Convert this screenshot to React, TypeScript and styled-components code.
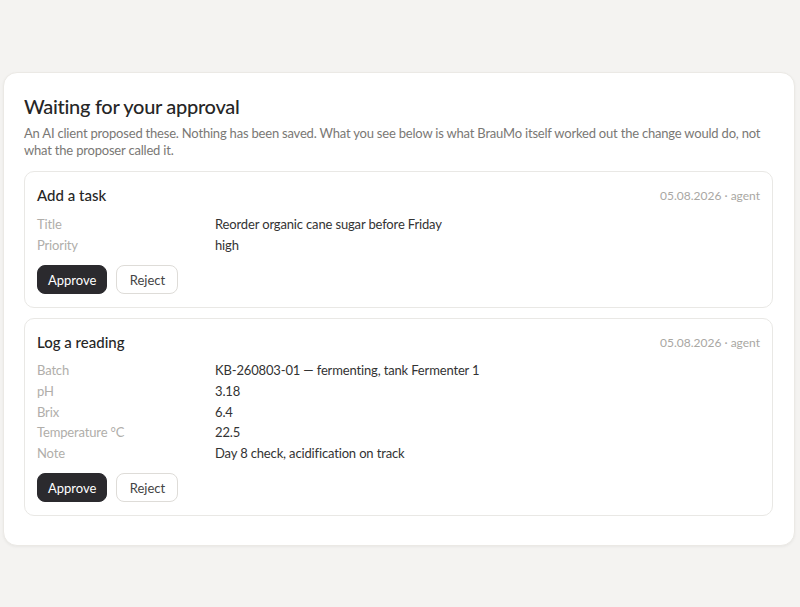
import React from 'react';
import styled, { createGlobalStyle } from 'styled-components';

const GlobalStyle = createGlobalStyle`
    html, body {
        margin: 0;
        padding: 0;
        background: #f4f3f1;
        font-family: Lato, "Noto Sans", sans-serif;
        -webkit-font-smoothing: antialiased;
    }
`;

const Page = styled.div`
    padding: 72px 5px 60px 3px;
`;

const Panel = styled.section`
    background: #ffffff;
    border: 1px solid #ebe9e5;
    border-radius: 14px;
    box-shadow: 0 1px 3px rgba(0, 0, 0, 0.05);
    padding: 20px 21px 29px 20px;
`;

const Heading = styled.h2`
    margin: 0;
    font-size: 20px;
    line-height: 26px;
    font-weight: 500;
    color: #262626;
    letter-spacing: -0.3px;
`;

const Intro = styled.p`
    margin: 6px 0 12px;
    font-size: 13px;
    line-height: 17px;
    color: #7a7875;
    letter-spacing: -0.2px;
`;

const ProposalList = styled.div`
    display: flex;
    flex-direction: column;
    gap: 10px;
`;

const ProposalCard = styled.div`
    border: 1px solid #e9e8e5;
    border-radius: 10px;
    padding: 13px 12px 13px 12px;
`;

const CardHeader = styled.div`
    display: flex;
    justify-content: space-between;
    align-items: center;
    height: 20px;
    margin-bottom: 8px;
`;

const CardTitle = styled.h3`
    margin: 0;
    font-size: 15px;
    font-weight: 500;
    color: #262626;
`;

const Meta = styled.span`
    font-size: 12px;
    color: #a9a7a3;
`;

const Fields = styled.dl<{ $rowHeight: number }>`
    display: grid;
    grid-template-columns: 178px 1fr;
    grid-auto-rows: ${p => p.$rowHeight}px;
    align-items: center;
    margin: 0 0 10px;
    font-size: 13px;
    letter-spacing: -0.15px;
`;

const FieldLabel = styled.dt`
    margin: 0;
    color: #b0aeaa;
`;

const FieldValue = styled.dd`
    margin: 0;
    color: #333333;
`;

const Actions = styled.div`
    display: flex;
    gap: 9px;
`;

const ActionButton = styled.button<{ $primary?: boolean }>`
    height: 29px;
    padding: 0 10px;
    border-radius: 8px;
    font-family: inherit;
    font-size: 13px;
    cursor: pointer;
    border: 1px solid ${p => (p.$primary ? '#2b2a2e' : '#dedcd8')};
    background: ${p => (p.$primary ? '#2b2a2e' : '#ffffff')};
    color: ${p => (p.$primary ? '#ffffff' : '#444444')};
    min-width: ${p => (p.$primary ? '70px' : '62px')};
`;

type Proposal = {
    id: string;
    title: string;
    meta: string;
    fields: [string, string][];
    rowHeight: number;
};

const proposals: Proposal[] = [
    {
        id: 'task',
        title: 'Add a task',
        meta: '05.08.2026 · agent',
        rowHeight: 21,
        fields: [
            ['Title', 'Reorder organic cane sugar before Friday'],
            ['Priority', 'high'],
        ],
    },
    {
        id: 'reading',
        title: 'Log a reading',
        meta: '05.08.2026 · agent',
        rowHeight: 20.7,
        fields: [
            ['Batch', 'KB-260803-01 — fermenting, tank Fermenter 1'],
            ['pH', '3.18'],
            ['Brix', '6.4'],
            ['Temperature °C', '22.5'],
            ['Note', 'Day 8 check, acidification on track'],
        ],
    },
];

const App: React.FC = () => {
    return (
        <Page>
            <GlobalStyle />
            <Panel>
                <Heading>Waiting for your approval</Heading>
                <Intro>
                    An AI client proposed these. Nothing has been saved. What you see below is what BrauMo itself
                    worked out the change would do, not what the proposer called it.
                </Intro>
                <ProposalList>
                    {proposals.map(proposal => (
                        <ProposalCard key={proposal.id}>
                            <CardHeader>
                                <CardTitle>{proposal.title}</CardTitle>
                                <Meta>{proposal.meta}</Meta>
                            </CardHeader>
                            <Fields $rowHeight={proposal.rowHeight}>
                                {proposal.fields.map(([label, value]) => (
                                    <React.Fragment key={label}>
                                        <FieldLabel>{label}</FieldLabel>
                                        <FieldValue>{value}</FieldValue>
                                    </React.Fragment>
                                ))}
                            </Fields>
                            <Actions>
                                <ActionButton $primary>Approve</ActionButton>
                                <ActionButton>Reject</ActionButton>
                            </Actions>
                        </ProposalCard>
                    ))}
                </ProposalList>
            </Panel>
        </Page>
    );
};

export default App;
